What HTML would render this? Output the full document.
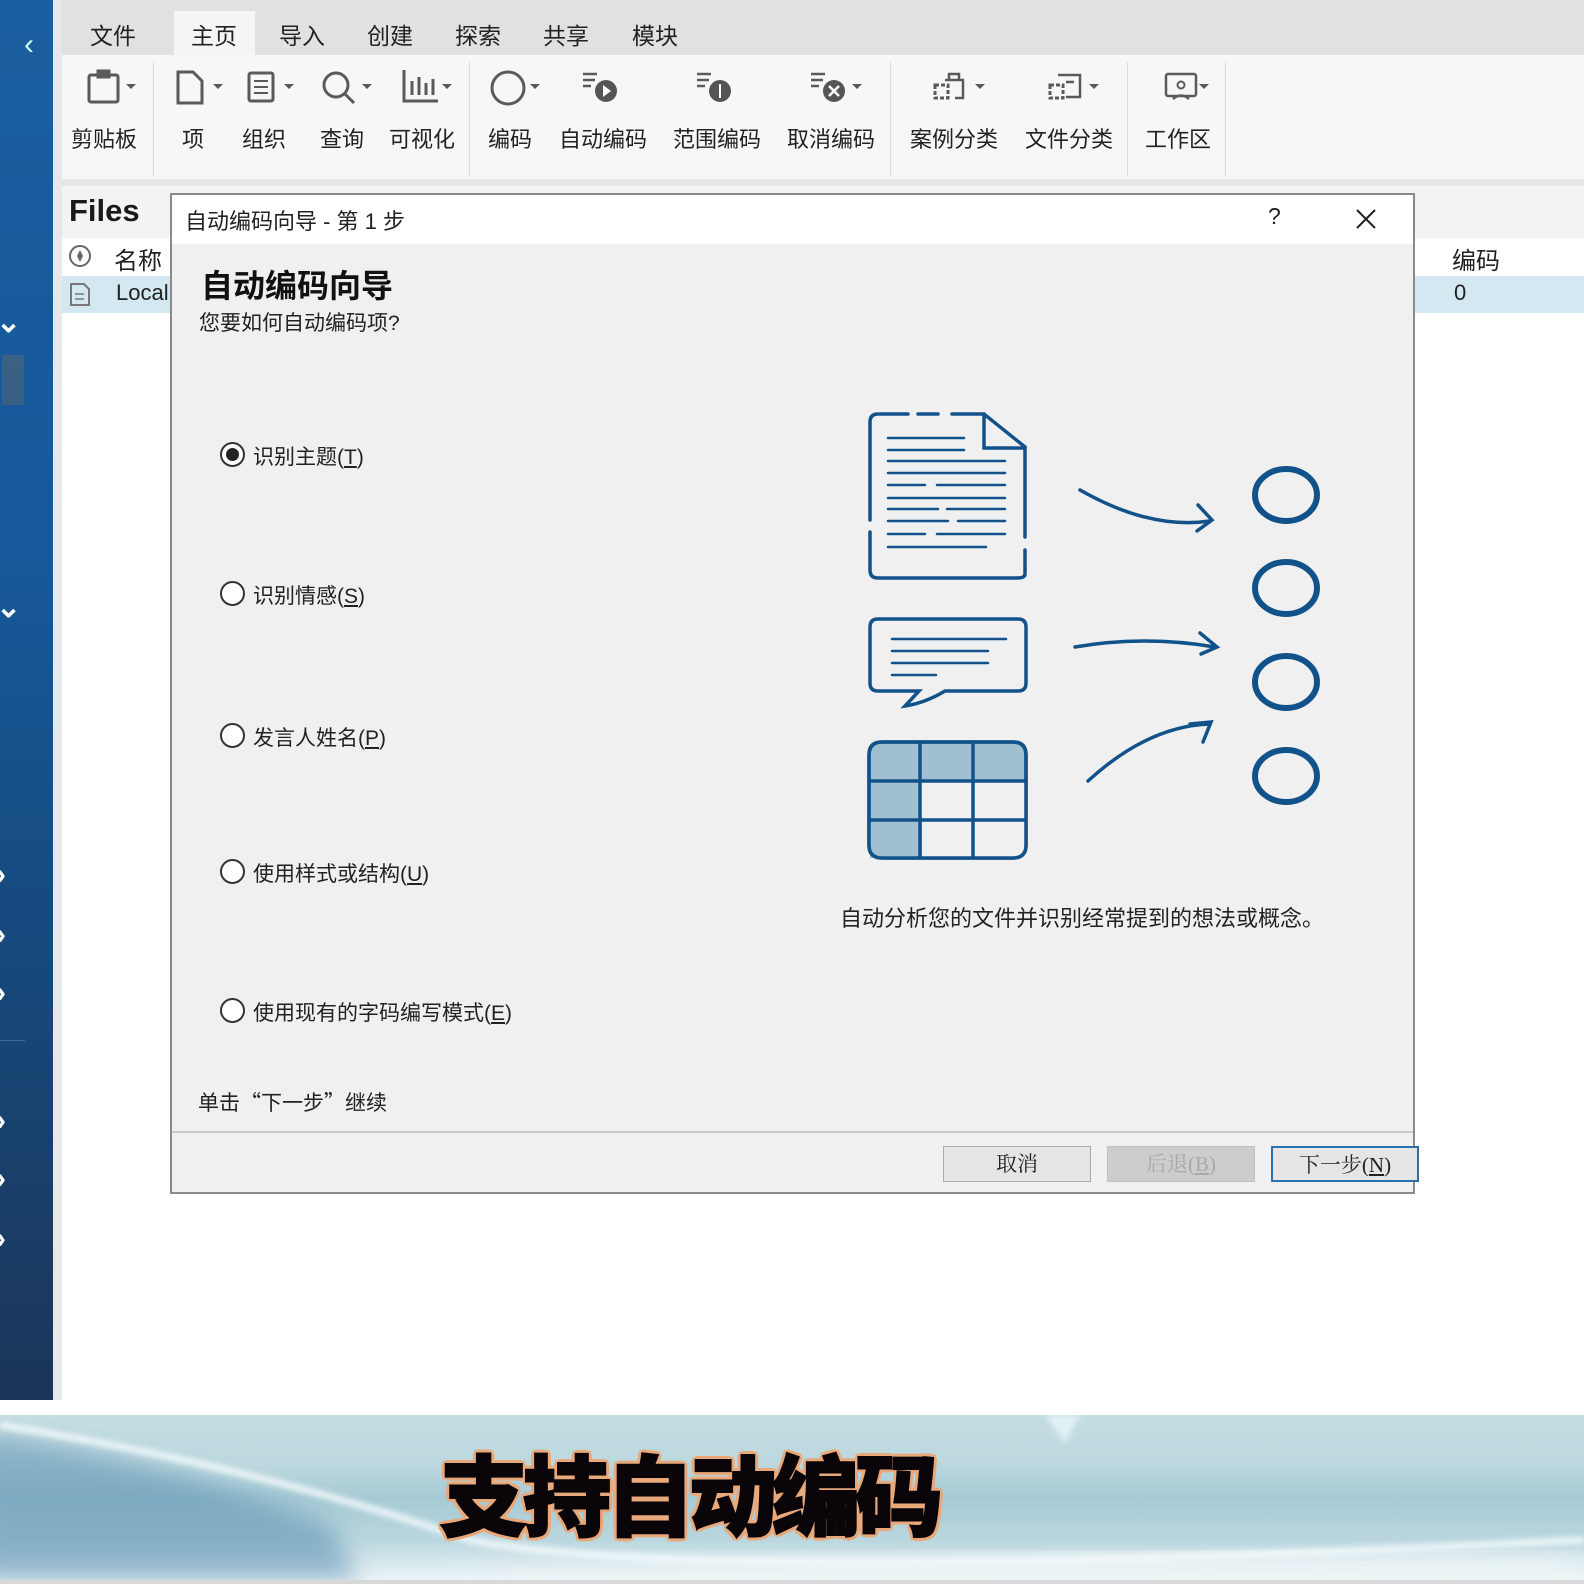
<!DOCTYPE html>
<html><head><meta charset="utf-8"><style>
*{margin:0;padding:0;box-sizing:border-box}
body{width:1584px;height:1584px;overflow:hidden;position:relative;background:#fff;font-family:"Liberation Sans","Noto Sans CJK SC",sans-serif;color:#222}
.a{position:absolute}
.t{position:absolute;white-space:nowrap}
.tab{font-size:23px;top:17px;transform:translateX(-50%)}
.lab{font-size:22px;top:122px;transform:translateX(-50%);color:#222}
.sep{position:absolute;top:62px;width:1px;height:114px;background:#dcdcdc}
.radio{position:absolute;left:220px;width:25px;height:25px;border:2px solid #333;border-radius:50%;background:#fff}
.rl{font-size:21px;left:253px}
.btn{position:absolute;top:1146px;width:148px;height:36px;border:1px solid #aaa;background:#e3e5e6;font-family:"Liberation Serif","Noto Serif CJK SC",serif;font-size:21px;text-align:center;line-height:34px}
.chev{position:absolute;color:#fff;font-size:30px;font-weight:bold;left:-4px}
</style></head><body>
<!-- sidebar -->
<div class="a" style="left:0;top:0;width:53px;height:1400px;background:linear-gradient(#1a5f9f,#165899 40%,#17487a 70%,#1b3558)"></div>
<div class="a" style="left:53px;top:0;width:9px;height:1400px;background:#e6e8ea"></div>
<div class="t" style="left:24px;top:28px;color:#cfe;font-size:30px">‹</div>
<div class="a" style="left:2px;top:355px;width:22px;height:50px;background:#7a6a5a;opacity:.35"></div>
<div class="chev" style="top:305px">⌄</div>
<div class="chev" style="top:590px">⌄</div>
<div class="chev" style="top:858px">›</div>
<div class="chev" style="top:918px">›</div>
<div class="chev" style="top:976px">›</div>
<div class="chev" style="top:1104px">›</div>
<div class="chev" style="top:1162px">›</div>
<div class="chev" style="top:1222px">›</div>
<div class="a" style="left:0;top:1040px;width:25px;height:1px;background:#3a6aa0"></div>
<!-- tabs -->
<div class="a" style="left:62px;top:0;width:1522px;height:55px;background:#dfe1e3"></div>
<div class="a" style="left:174px;top:11px;width:81px;height:45px;background:#f4f5f5"></div>
<div class="t tab" style="left:113px">文件</div>
<div class="t tab" style="left:214px">主页</div>
<div class="t tab" style="left:302px">导入</div>
<div class="t tab" style="left:390px">创建</div>
<div class="t tab" style="left:478px">探索</div>
<div class="t tab" style="left:566px">共享</div>
<div class="t tab" style="left:655px">模块</div>
<!-- ribbon -->
<div class="a" style="left:62px;top:55px;width:1522px;height:126px;background:#f6f7f7"></div>
<div class="a" style="left:62px;top:179px;width:1522px;height:7px;background:#e4e6e8"></div>
<div class="sep" style="left:153px"></div><div class="sep" style="left:469px"></div><div class="sep" style="left:890px"></div><div class="sep" style="left:1127px"></div><div class="sep" style="left:1225px"></div>
<svg class="a" style="left:62px;top:60px" width="1180" height="60" viewBox="62 60 1180 60" fill="none" stroke="#5a5a5a" stroke-width="3">
<rect x="89" y="75" width="29" height="27" rx="2"/><rect x="98" y="71" width="11" height="6" fill="#5a5a5a"/>
<path d="M178 72h15l9 9v22h-24z"/>
<rect x="249" y="73" width="24" height="28" rx="2"/><path d="M254 81h14M254 87h14M254 93h14" stroke-width="2"/>
<circle cx="336" cy="85" r="12"/><path d="M345 94l9 9"/>
<path d="M404 70v31h34M412 95v-14M419 95v-18M426 95v-12M433 95v-16"/>
<ellipse cx="508" cy="88" rx="16" ry="16"/>
<path d="M583 74h14M583 80h12M583 86h8" stroke-width="2.5"/><circle cx="606" cy="91" r="11" fill="#555" stroke="none"/><path d="M603 85l8 6-8 6z" fill="#fff" stroke="none"/>
<path d="M697 74h14M697 80h12M697 86h8" stroke-width="2.5"/><circle cx="720" cy="91" r="11" fill="#555" stroke="none"/><path d="M720 84v14" stroke="#fff" stroke-width="2"/>
<path d="M811 74h14M811 80h12M811 86h8" stroke-width="2.5"/><circle cx="834" cy="91" r="11" fill="#555" stroke="none"/><path d="M829 86l10 10M839 86l-10 10" stroke="#fff" stroke-width="2.5"/>
<path d="M945 80h18v18h-8M949 80v-6h10v6" stroke-width="2.5"/><rect x="935" y="85" width="13" height="13" stroke-width="3" stroke-dasharray="4 2"/>
<path d="M1058 75h22v22h-14M1066 82h8" stroke-width="2.5"/><rect x="1050" y="85" width="13" height="13" stroke-width="3" stroke-dasharray="4 2"/>
<rect x="1166" y="74" width="30" height="22" rx="2" stroke-width="2.5"/><circle cx="1181" cy="85" r="3.5" stroke-width="2"/><path d="M1173 99q8-7 16 0" stroke-width="2.5"/>
<g fill="#5a5a5a" stroke="none"><path d="M126 84h10l-5 5z"/><path d="M213 84h10l-5 5z"/><path d="M284 84h10l-5 5z"/><path d="M362 84h10l-5 5z"/><path d="M442 84h10l-5 5z"/><path d="M530 84h10l-5 5z"/><path d="M852 84h10l-5 5z"/><path d="M975 84h10l-5 5z"/><path d="M1089 84h10l-5 5z"/><path d="M1199 84h10l-5 5z"/></g>
</svg>
<div class="t lab" style="left:104px">剪贴板</div>
<div class="t lab" style="left:193px">项</div>
<div class="t lab" style="left:264px">组织</div>
<div class="t lab" style="left:342px">查询</div>
<div class="t lab" style="left:422px">可视化</div>
<div class="t lab" style="left:510px">编码</div>
<div class="t lab" style="left:603px">自动编码</div>
<div class="t lab" style="left:717px">范围编码</div>
<div class="t lab" style="left:831px">取消编码</div>
<div class="t lab" style="left:954px">案例分类</div>
<div class="t lab" style="left:1069px">文件分类</div>
<div class="t lab" style="left:1178px">工作区</div>
<!-- files panel -->
<div class="a" style="left:62px;top:186px;width:1522px;height:52px;background:#f2f3f4"></div>
<div class="t" style="left:69px;top:193px;font-size:31px;font-weight:bold;color:#1a1a1a">Files</div>
<div class="a" style="left:62px;top:276px;width:1522px;height:37px;background:#d3e8f0"></div>
<svg class="a" style="left:66px;top:243px" width="30" height="65"><circle cx="14" cy="13" r="10" fill="none" stroke="#666" stroke-width="2"/><path d="M14 7l3 6-3 6-3-6z" fill="#666"/><path d="M5 41h13l5 5v16H5z" fill="none" stroke="#777" stroke-width="2"/><path d="M9 51h9M9 56h9" stroke="#777" stroke-width="1.5"/></svg>
<div class="t" style="left:114px;top:241px;font-size:24px">名称</div>
<div class="t" style="left:116px;top:280px;font-size:22px">Local</div>
<div class="t" style="left:1452px;top:241px;font-size:24px">编码</div>
<div class="t" style="left:1454px;top:280px;font-size:22px">0</div>
<!-- dialog -->
<div class="a" style="left:170px;top:193px;width:1245px;height:1001px;border:2px solid #8a8a8a;background:#f0f0f0"></div>
<div class="a" style="left:172px;top:195px;width:1241px;height:49px;background:#fff"></div>
<div class="t" style="left:185px;top:204px;font-size:22px">自动编码向导 - 第 1 步</div>
<div class="t" style="left:1268px;top:203px;font-size:23px">?</div>
<svg class="a" style="left:1355px;top:208px" width="22" height="22"><path d="M2 2l18 18M20 2L2 20" stroke="#222" stroke-width="2"/></svg>
<div class="t" style="left:201px;top:261px;font-size:32px;font-weight:bold;color:#111">自动编码向导</div>
<div class="t" style="left:199px;top:307px;font-size:21px">您要如何自动编码项?</div>
<div class="radio" style="top:442px"><div class="a" style="left:4px;top:4px;width:13px;height:13px;border-radius:50%;background:#222"></div></div>
<div class="t rl" style="top:441px">识别主题(<u>T</u>)</div>
<div class="radio" style="top:581px"></div><div class="t rl" style="top:580px">识别情感(<u>S</u>)</div>
<div class="radio" style="top:723px"></div><div class="t rl" style="top:722px">发言人姓名(<u>P</u>)</div>
<div class="radio" style="top:859px"></div><div class="t rl" style="top:858px">使用样式或结构(<u>U</u>)</div>
<div class="radio" style="top:998px"></div><div class="t rl" style="top:997px">使用现有的字码编写模式(<u>E</u>)</div>
<div class="t" style="left:198px;top:1087px;font-size:21px;font-family:'Noto Sans CJK SC',sans-serif">单击“下一步”继续</div>
<div class="t" style="left:840px;top:901px;font-size:22px">自动分析您的文件并识别经常提到的想法或概念。</div>
<svg class="a" style="left:850px;top:400px" width="480" height="470" fill="none" stroke="#12528a" stroke-width="3.5" stroke-linecap="round">
<path d="M30 14h28M68 14h20M102 14h32L175 47v90M175 150v24q0 4-8 4H28q-8 0-8-8V132M20 120V22q0-8 8-8"/>
<path d="M134 14v34h41"/>
<g stroke-width="2.5"><path d="M38 38h76M38 50h76M38 61h117M38 73h117M38 85h37M87 85h68M38 98h117M38 109h50M97 109h58M38 121h60M108 121h47M38 134h37M87 134h68M38 147h98"/></g>
<path d="M28 219h140q8 0 8 8v56q0 8-8 8H95q-20 12-40 15l14-15H28q-8 0-8-8v-56q0-8 8-8z"/>
<g stroke-width="2.5"><path d="M42 239h114M42 251h96M42 263h96M42 275h44"/></g>
<path d="M32 342h131q13 0 13 13v90q0 13-13 13H32q-13 0-13-13v-90q0-13 13-13z" fill="#a0bfd0"/>
<path d="M71 381h105v77H71z" fill="#f0f0f0" stroke="none"/><path d="M20 420h52v38H20z" fill="#a0bfd0" stroke="none"/>
<path d="M32 342h131q13 0 13 13v90q0 13-13 13H32q-13 0-13-13v-90q0-13 13-13zM20 381h156M20 420h156M70 342v116M123 342v116"/>
<path d="M230 90q70 40 130 31M348 105l14 15-15 11"/>
<path d="M225 247q70-12 140 0M350 233l17 14-16 7"/>
<path d="M238 381q60-55 122-57M340 324l21-2-8 20"/>
<g stroke-width="6"><ellipse cx="436" cy="95" rx="31" ry="26"/><ellipse cx="436" cy="188" rx="31" ry="26"/><ellipse cx="436" cy="282" rx="31" ry="26"/><ellipse cx="436" cy="376" rx="31" ry="26"/></g>
</svg>
<div class="a" style="left:172px;top:1131px;width:1241px;height:2px;background:#c8c8c8"></div>
<div class="btn" style="left:943px">取消</div>
<div class="btn" style="left:1107px;background:#cfcdcb;color:#a8a8a8;border-color:#c0c0c0">后退(<u>B</u>)</div>
<div class="btn" style="left:1271px;border:2px solid #2a6fb0">下一步(<u>N</u>)</div>
<!-- banner -->
<div class="a" style="left:0;top:1415px;width:1584px;height:166px;overflow:hidden;background:linear-gradient(180deg,#c4dde2 0%,#bcd8de 30%,#a6cad4 50%,#b9d6de 75%,#eef5f7 100%)">
<svg class="a" style="left:0;top:0" width="1584" height="166"><defs><filter id="b"><feGaussianBlur stdDeviation="12"/></filter><filter id="c"><feGaussianBlur stdDeviation="3"/></filter></defs>
<path d="M-20 20Q150 40 330 110L360 166H-20z" fill="#5b8fb2" opacity=".55" filter="url(#b)"/>
<path d="M0 10Q250 50 470 125Q700 170 1584 125" stroke="#f6fbfc" stroke-width="7" fill="none" opacity=".85" filter="url(#c)"/>
<path d="M400 166Q800 130 1584 140V166z" fill="#f3f8f9" opacity=".7" filter="url(#b)"/>
<path d="M1045 0h35l-15 28z" fill="#e2f1f4" filter="url(#c)"/></svg></div>
<div class="a" style="left:0;top:1580px;width:1584px;height:4px;background:#d8d8d8"></div>
<div class="t" style="left:440px;top:1428px;font-size:88px;font-weight:900;color:#0a0508;letter-spacing:-5px;-webkit-text-stroke:2px #0a0508;text-shadow:3px 3px 0 #e8a87a,-3px -3px 0 #e8a87a,3px -3px 0 #e8a87a,-3px 3px 0 #e8a87a,0 4px 0 #e8a87a,4px 0 0 #e8a87a,-4px 0 0 #e8a87a,0 -4px 0 #e8a87a">支持自动编码</div>
</body></html>
